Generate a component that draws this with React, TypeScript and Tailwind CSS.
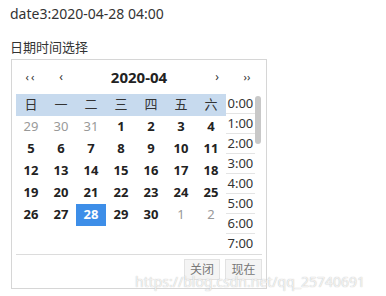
const FONT = { fontFamily: '"Noto Sans", "Noto Sans CJK SC", sans-serif' };

const weekDays = ["日", "一", "二", "三", "四", "五", "六"];

// 2020 年 4 月正好 5 行
const weeks: { d: number; other?: boolean }[][] = [
  [{ d: 29, other: true }, { d: 30, other: true }, { d: 31, other: true }, { d: 1 }, { d: 2 }, { d: 3 }, { d: 4 }],
  [{ d: 5 }, { d: 6 }, { d: 7 }, { d: 8 }, { d: 9 }, { d: 10 }, { d: 11 }],
  [{ d: 12 }, { d: 13 }, { d: 14 }, { d: 15 }, { d: 16 }, { d: 17 }, { d: 18 }],
  [{ d: 19 }, { d: 20 }, { d: 21 }, { d: 22 }, { d: 23 }, { d: 24 }, { d: 25 }],
  [{ d: 26 }, { d: 27 }, { d: 28 }, { d: 29 }, { d: 30 }, { d: 1, other: true }, { d: 2, other: true }],
];

const hours = ["0:00", "1:00", "2:00", "3:00", "4:00", "5:00", "6:00", "7:00"];

function DayCell({ d, other }: { d: number; other?: boolean }) {
  const selected = d === 28 && !other;
  return (
    <div
      className={
        "flex h-[22px] w-[30px] items-center justify-center text-[13px] " +
        (selected
          ? "bg-[#3d8ee8] font-bold text-white"
          : other
            ? "text-[#999]"
            : "font-bold text-[#222]")
      }
    >
      {d}
    </div>
  );
}

function DateTimePicker() {
  return (
    <div className="ml-[11px] mt-[3px] flex w-[256px] flex-col border border-[#d6d6d6] bg-white px-[4px]">
      {/* 头部 */}
      <div className="flex h-[34px] items-center text-[#333]">
        <span className="w-[30px] text-center text-[11px] tracking-[2px]">‹‹</span>
        <span className="w-[30px] text-center text-[12px]">‹</span>
        <span className="flex-1 text-center text-[15px] font-bold text-[#222]">2020-04</span>
        <span className="w-[30px] text-center text-[12px]">›</span>
        <span className="w-[30px] text-center text-[11px]">››</span>
      </div>

      <div className="flex">
        {/* 日历 */}
        <div className="w-[210px]">
          <div className="flex bg-[#c7daee]">
            {weekDays.map((w) => (
              <div key={w} className="flex h-[22px] w-[30px] items-center justify-center text-[13px] text-[#333]">
                {w}
              </div>
            ))}
          </div>
          {weeks.map((row, i) => (
            <div key={i} className="flex">
              {row.map((c, j) => (
                <DayCell key={j} d={c.d} other={c.other} />
              ))}
            </div>
          ))}
        </div>

        {/* 时间列表 */}
        <div className="w-[32px]">
          {hours.map((h, i) => (
            <div
              key={h}
              className={
                "flex h-[20px] items-center justify-center text-[13px] text-[#333] " +
                (i < hours.length - 1 ? "border-b border-[#e4e4e4]" : "")
              }
            >
              {h}
            </div>
          ))}
        </div>
        <div className="flex w-[8px] justify-center pt-[2px]">
          <div className="h-[48px] w-[6px] rounded-full bg-[#c8c8c8]" />
        </div>
      </div>

      {/* 底部按钮 */}
      <div className="flex h-[34px] justify-end gap-[5px] border-t border-[#dcdcdc] pt-[4px]">
        <button type="button" className="h-[21px] w-[36px] border border-[#e2e2e2] bg-[#f4f4f4] text-[12px] text-[#777]">
          关闭
        </button>
        <button type="button" className="h-[21px] w-[37px] border border-[#e2e2e2] bg-[#f4f4f4] text-[12px] text-[#777]">
          现在
        </button>
      </div>
    </div>
  );
}

export default function App() {
  return (
    <div className="relative h-[296px] w-[386px] overflow-hidden bg-white pt-[4px]" style={FONT}>
      <div className="pl-[10px] text-[14px] leading-[20px] text-[#333]">date3:2020-04-28 04:00</div>
      <div className="mt-[14px] pl-[10px] text-[13px] leading-[18px] text-[#333]">日期时间选择</div>
      <DateTimePicker />
      {/* 水印 */}
      <div className="pointer-events-none absolute left-[135px] top-[273px] whitespace-nowrap text-[14px] leading-[18px] text-white/80 [text-shadow:0_0_1px_#aaa]">
        https://blog.csdn.net/qq_25740691
      </div>
    </div>
  );
}
